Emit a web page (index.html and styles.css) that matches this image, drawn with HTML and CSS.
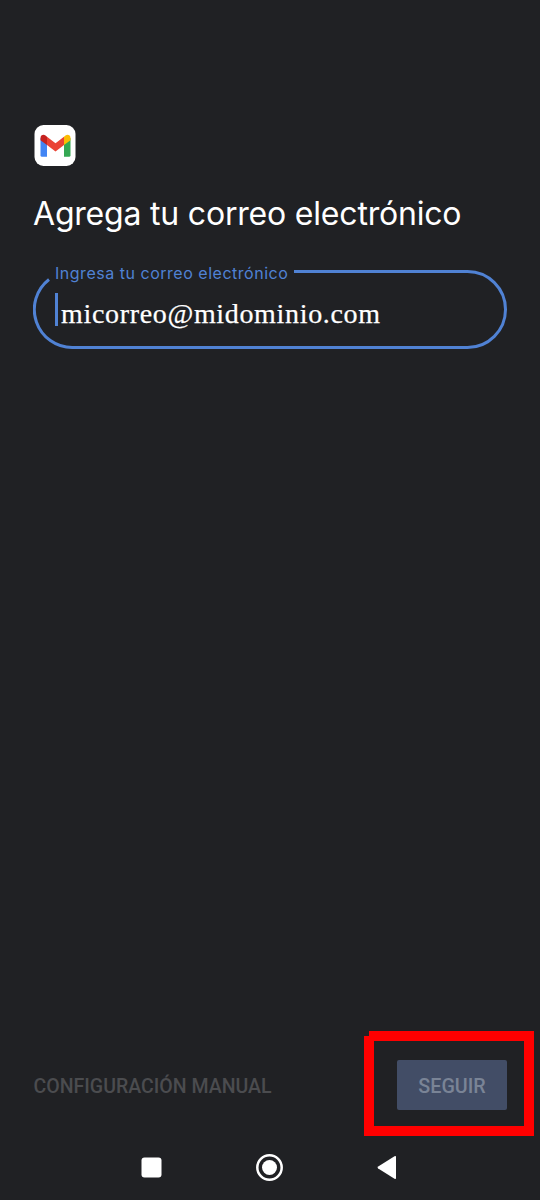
FILE: index.html
```html
<!DOCTYPE html>
<html lang="es">
<head>
<meta charset="utf-8">
<title>Agrega tu correo electrónico</title>
<link rel="stylesheet" href="styles.css">
</head>
<body>
<main class="screen">
  <section class="content">
    <svg class="logo" viewBox="0 0 42 42" aria-label="Gmail">
      <rect x="0.500" y="0" width="41" height="41" rx="9" fill="#fff"/>
      <path d="M6.500 13v17.200q0 1.500 1.500 1.500h5V17z" fill="#4285f4"/>
      <path d="M36.500 13v17.200q0 1.500-1.500 1.500h-5V17z" fill="#34a853"/>
      <path d="M13 11.700l8.500 6.500 8.500-6.500v8.400l-8.500 6.500-8.500-6.500z" fill="#ea4335"/>
      <path d="M30 11.700l1.500-1.200c2.200-1.600 5-.200 5 2.500v2.200l-6.500 4.900z" fill="#fbbc04"/>
      <path d="M13 11.700l-1.500-1.200c-2.200-1.600-5-.200-5 2.500v2.200l6.500 4.900z" fill="#c5221f"/>
    </svg>
    <h1 class="title">Agrega tu correo electrónico</h1>
    <div class="field">
      <svg class="outline" viewBox="0 0 474 79" aria-hidden="true">
        <path d="M16 9.500A38 38 0 0 0 39.500 77.500H434.500A38 38 0 0 0 434.500 1.500H261"/>
      </svg>
      <label class="label">Ingresa tu correo electrónico</label>
      <div class="entry"><span class="caret"></span><span class="value">micorreo@midominio.com</span></div>
    </div>
  </section>
  <footer class="actions">
    <span class="manual">CONFIGURACIÓN MANUAL</span>
    <div class="highlight"><button class="next">SEGUIR</button></div>
  </footer>
  <nav class="navbar">
    <svg class="nav-icons" viewBox="0 0 540 65" aria-hidden="true">
      <rect x="141.500" y="22.500" width="20" height="20" rx="3"/>
      <circle class="ring" cx="269.500" cy="32.500" r="12.200"/>
      <circle cx="269.500" cy="32.500" r="7.500"/>
      <path d="M378.200 31.500L394.500 21.300Q396 20.400 396 22V43Q396 44.600 394.500 43.700L378.200 33.500Q376.800 32.500 378.200 31.500Z"/>
    </svg>
  </nav>
</main>
</body>
</html>
```
FILE: styles.css
```css
* { box-sizing: border-box; }
body { margin: 0; background: #202124; }
.screen {
  display: flex;
  flex-direction: column;
  width: 540px;
  height: 1200px;
  background: #202124;
  color: #fff;
  font-family: Roboto, sans-serif;
}
.content { flex: 1; padding: 125px 33px 0 34px; }
.logo { display: block; width: 42px; height: 42px; }
.title {
  margin: 26px 0 0 -1px;
  height: 42px;
  font: 400 32px/42px Inter, sans-serif;
  letter-spacing: -0.2px;
  white-space: nowrap;
}
.field {
  position: relative;
  width: 474px;
  height: 79px;
  margin: 35px 0 0 -1px;
  padding: 23px 22px;
}
.outline { position: absolute; inset: 0; width: 474px; height: 79px; }
.outline path { fill: none; stroke: #5082d4; stroke-width: 3; }
.label {
  position: absolute;
  left: 22px;
  top: -7px;
  color: #5082d4;
  font: 400 16px/20px Inter, sans-serif;
  letter-spacing: 0.52px;
  white-space: nowrap;
}
.entry { display: flex; align-items: flex-start; }
.caret { width: 3px; height: 33px; background: #5082d4; }
.value {
  margin-left: 3px;
  font: 28px/42px "Liberation Serif", serif;
  letter-spacing: 0.67px;
  -webkit-text-stroke: 0.25px #fff;
}
.actions {
  display: flex;
  align-items: center;
  justify-content: space-between;
  height: 105px;
  padding: 0 6px 0 33.500px;
}
.manual {
  color: #4b4c4f;
  font: 500 19.550px/24px Roboto, sans-serif;
  padding-top: 7px;
}
.highlight {
  width: 170px;
  height: 105px;
  padding: 29px 27px 26px 33px;
  background: linear-gradient(#202124, #202124) 10px 10px / 150px 85px no-repeat, #f00;
  clip-path: polygon(5px 0, 100% 0, 100% 100%, 0 100%, 0 5px, 5px 5px);
}
.next {
  display: block;
  width: 110px;
  height: 50px;
  padding: 4px 0 0;
  border: 0;
  border-radius: 2px;
  background: #424d66;
  color: #7a8496;
  font: 500 19.700px/24px Roboto, sans-serif;
}
.navbar { height: 64px; }
.nav-icons { display: block; width: 540px; height: 65px; fill: #fff; margin-top: -1px; }
.ring { fill: none; stroke: #fff; stroke-width: 2.500; }
```
